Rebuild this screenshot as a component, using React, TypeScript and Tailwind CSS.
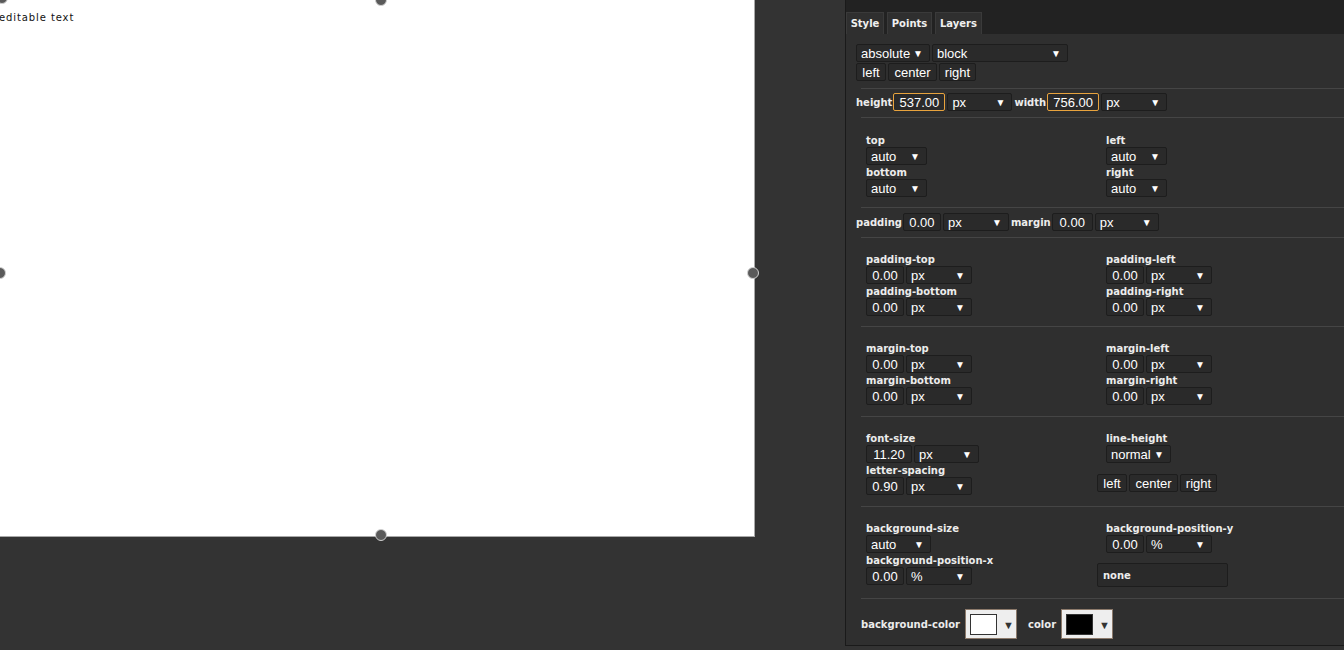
import type { ReactNode } from "react";

const LABEL_FONT = { fontFamily: '"DejaVu Sans", Verdana, sans-serif' };
const FIELD_FONT = { fontFamily: '"Liberation Sans", Arial, sans-serif' };

/* ------------------------------------------------------------------ */
/*  Small form pieces                                                  */
/* ------------------------------------------------------------------ */
function Label({ children, className = "" }: { children: ReactNode; className?: string }) {
  return (
    <div
      className={`text-[10px] font-bold leading-[13px] h-[13px] text-[#ececec] whitespace-nowrap ${className}`}
      style={LABEL_FONT}
    >
      {children}
    </div>
  );
}

function Sel({ v, className }: { v: string; className: string }) {
  return (
    <div
      className={`h-[18px] shrink-0 flex items-center justify-between pl-[4px] pr-[6px] pt-[1px] bg-[#2a2a2a] border border-[#1d1d1d] rounded-[2px] text-[13px] leading-[16px] text-white ${className}`}
      style={FIELD_FONT}
    >
      <span>{v}</span>
      <span className="text-[10px] leading-none text-white">▼</span>
    </div>
  );
}

function Inp({ v, className, active = false }: { v: string; className: string; active?: boolean }) {
  return (
    <div
      className={`h-[18px] shrink-0 flex items-center justify-center pt-[1px] bg-[#2a2a2a] border rounded-[2px] text-[13px] leading-[16px] text-white ${
        active ? "border-[#e8a33d]" : "border-[#1d1d1d]"
      } ${className}`}
      style={FIELD_FONT}
    >
      {v}
    </div>
  );
}

function Btn({ v, className }: { v: string; className: string }) {
  return (
    <div
      className={`h-[18px] shrink-0 flex items-center justify-center pt-[1px] bg-[#2a2a2a] border border-[#1d1d1d] rounded-[2px] text-[13px] leading-[16px] text-white ${className}`}
      style={FIELD_FONT}
    >
      {v}
    </div>
  );
}

function AlignButtons({ className = "" }: { className?: string }) {
  return (
    <div className={`flex gap-[2px] ${className}`}>
      <Btn v="left" className="w-[30px]" />
      <Btn v="center" className="w-[49px]" />
      <Btn v="right" className="w-[37px]" />
    </div>
  );
}

function Sep() {
  return <div className="h-px bg-[#454545] ml-[5px]" />;
}

function UnitField({ label, v = "0.00", unit = "px", first = false }: { label: string; v?: string; unit?: string; first?: boolean }) {
  return (
    <div className={first ? "" : "mt-[1px]"}>
      <Label>{label}</Label>
      <div className="flex gap-[2px]">
        <Inp v={v} className="w-[38px]" />
        <Sel v={unit} className="w-[66px]" />
      </div>
    </div>
  );
}

function ColorPicker({ swatch }: { swatch: string }) {
  return (
    <div className="w-[52px] h-[30px] shrink-0 bg-[#eeeeee] border border-[#8c7a6b] flex items-center pl-[4px] gap-[6px]">
      <div className={`w-[27px] h-[21px] border border-[#333] ${swatch}`} />
      <span className="text-[11px] leading-none text-[#333]">▼</span>
    </div>
  );
}

/* ------------------------------------------------------------------ */
/*  Canvas handle                                                      */
/* ------------------------------------------------------------------ */
function Handle({ className }: { className: string }) {
  return <div className={`absolute w-[12px] h-[12px] rounded-full bg-[#5a5a5a] border border-[#d0d0d0] ${className}`} />;
}

/* ------------------------------------------------------------------ */
/*  App                                                                */
/* ------------------------------------------------------------------ */
export default function App() {
  return (
    <div className="w-[1344px] h-[650px] bg-[#333333] flex overflow-hidden">
      {/* Canvas area */}
      <div className="w-[845px] shrink-0 relative">
        <div className="w-[755px] h-[537px] bg-white border-r border-b border-[#a8a8a8] pt-[11px]">
          <div
            className="text-[10px] leading-[13px] tracking-[0.9px] text-[#111] ml-[-1px]"
            style={LABEL_FONT}
          >
            editable text
          </div>
        </div>
        <Handle className="left-[-4px] top-[-8px]" />
        <Handle className="left-[375px] top-[-6px]" />
        <Handle className="left-[-6px] top-[267px]" />
        <Handle className="left-[747px] top-[267px]" />
        <Handle className="left-[375px] top-[529px]" />
      </div>

      {/* Property panel */}
      <div className="w-[499px] shrink-0 h-[646px] bg-[#2f2f2f] border-l border-b border-[#1a1a1a] flex flex-col">
        {/* Tabs */}
        <div className="h-[34px] bg-[#222222] pt-[12px] flex gap-[3px] items-end">
          {["Style", "Points", "Layers"].map((t, i) => (
            <div
              key={t}
              className={`h-[22px] bg-[#2f2f2f] border border-b-0 border-[#3a3a3a] flex items-center justify-center text-[10px] font-bold text-[#f0f0f0] ${
                i === 0 ? "w-[38px]" : i === 1 ? "w-[45px]" : "w-[47px]"
              }`}
              style={LABEL_FONT}
            >
              {t}
            </div>
          ))}
        </div>

        <div className="pl-[10px] pt-[10px]">
          {/* Position / display */}
          <div className="flex gap-[2px]">
            <Sel v="absolute" className="w-[74px]" />
            <Sel v="block" className="w-[136px]" />
          </div>
          <AlignButtons className="mt-[1px]" />

          <div className="mt-[7px]">
            <Sep />
          </div>

          {/* Size */}
          <div className="flex items-center mt-[4px]">
            <Label className="leading-[19px] h-[18px] mr-[1px]">height</Label>
            <Inp v="537.00" active className="w-[52px]" />
            <Sel v="px" className="w-[65px] ml-[2px]" />
            <Label className="leading-[19px] h-[18px] ml-[2px] mr-[1px]">width</Label>
            <Inp v="756.00" active className="w-[52px]" />
            <Sel v="px" className="w-[66px] ml-[2px]" />
          </div>

          <div className="mt-[6px]">
            <Sep />
          </div>

          {/* Offsets */}
          <div className="grid grid-cols-[240px_1fr] pl-[10px] pt-[16px] pb-[10px]">
            <div>
              <Label>top</Label>
              <Sel v="auto" className="w-[61px]" />
              <Label className="mt-[1px]">bottom</Label>
              <Sel v="auto" className="w-[61px]" />
            </div>
            <div>
              <Label>left</Label>
              <Sel v="auto" className="w-[61px]" />
              <Label className="mt-[1px]">right</Label>
              <Sel v="auto" className="w-[61px]" />
            </div>
          </div>

          <Sep />

          {/* Padding / margin shorthand */}
          <div className="flex items-center mt-[5px]">
            <Label className="leading-[19px] h-[18px] mr-[1px]">padding</Label>
            <Inp v="0.00" className="w-[38px]" />
            <Sel v="px" className="w-[66px] ml-[2px]" />
            <Label className="leading-[19px] h-[18px] ml-[2px] mr-[1px]">margin</Label>
            <Inp v="0.00" className="w-[41px]" />
            <Sel v="px" className="w-[64px] ml-[2px]" />
          </div>

          <div className="mt-[6px]">
            <Sep />
          </div>

          {/* Padding sides */}
          <div className="grid grid-cols-[240px_1fr] pl-[10px] pt-[15px] pb-[10px]">
            <div>
              <UnitField label="padding-top" first />
              <UnitField label="padding-bottom" />
            </div>
            <div>
              <UnitField label="padding-left" first />
              <UnitField label="padding-right" />
            </div>
          </div>

          <Sep />

          {/* Margin sides */}
          <div className="grid grid-cols-[240px_1fr] pl-[10px] pt-[15px] pb-[11px]">
            <div>
              <UnitField label="margin-top" first />
              <UnitField label="margin-bottom" />
            </div>
            <div>
              <UnitField label="margin-left" first />
              <UnitField label="margin-right" />
            </div>
          </div>

          <Sep />

          {/* Text */}
          <div className="grid grid-cols-[240px_1fr] pl-[10px] pt-[15px] pb-[11px]">
            <div>
              <Label>font-size</Label>
              <div className="flex gap-[2px]">
                <Inp v="11.20" className="w-[46px]" />
                <Sel v="px" className="w-[65px]" />
              </div>
              <UnitField label="letter-spacing" v="0.90" />
            </div>
            <div>
              <Label>line-height</Label>
              <Sel v="normal" className="w-[65px]" />
              <AlignButtons className="mt-[11px] ml-[-9px]" />
            </div>
          </div>

          <Sep />

          {/* Background */}
          <div className="grid grid-cols-[240px_1fr] pl-[10px] pt-[15px] pb-[11px]">
            <div>
              <Label>background-size</Label>
              <Sel v="auto" className="w-[65px]" />
              <UnitField label="background-position-x" unit="%" />
            </div>
            <div>
              <UnitField label="background-position-y" unit="%" first />
              <div
                className="mt-[10px] ml-[-9px] w-[131px] h-[24px] bg-[#2a2a2a] border border-[#1d1d1d] rounded-[2px] flex items-center pl-[5px] pt-[1px] text-[10px] font-bold text-[#ececec]"
                style={LABEL_FONT}
              >
                none
              </div>
            </div>
          </div>

          <Sep />

          {/* Colours */}
          <div className="flex items-center mt-[10px] ml-[5px]">
            <Label className="leading-[31px] h-[30px] mr-[5px]">background-color</Label>
            <ColorPicker swatch="bg-white" />
            <Label className="leading-[31px] h-[30px] ml-[11px] mr-[5px]">color</Label>
            <ColorPicker swatch="bg-black" />
          </div>
        </div>
      </div>
    </div>
  );
}
